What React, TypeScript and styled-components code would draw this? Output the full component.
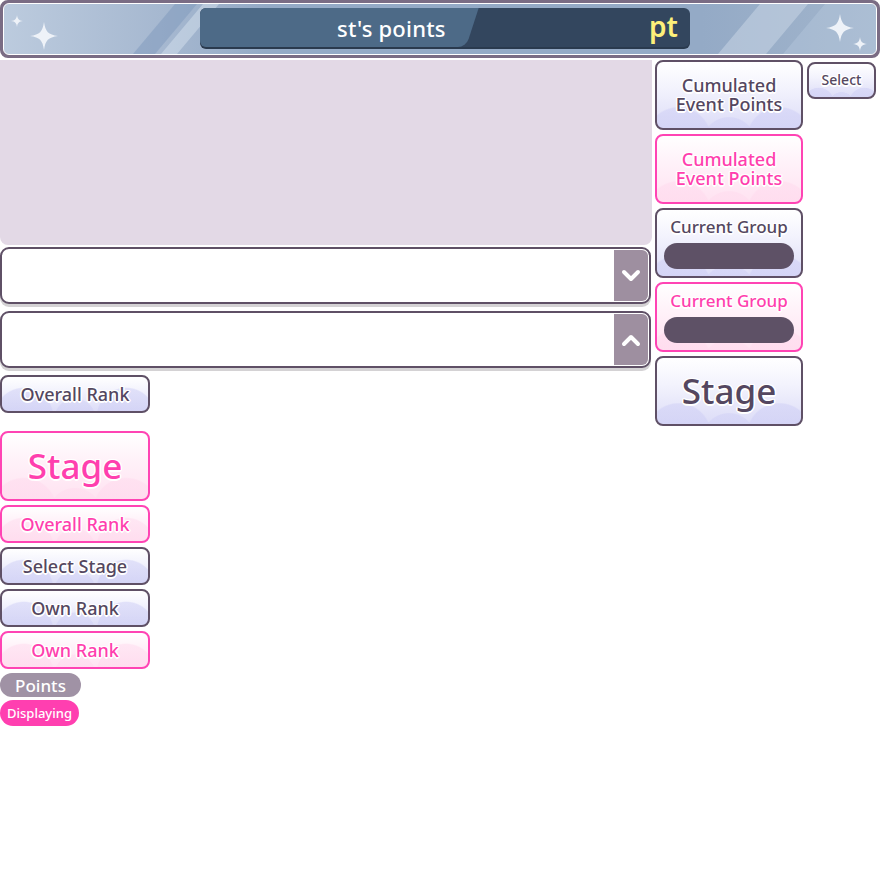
import React from "react";
import styled, { createGlobalStyle, css } from "styled-components";

const Global = createGlobalStyle`
  html, body { margin: 0; padding: 0; background: #ffffff; }
  body { font-family: "Noto Sans", "Open Sans", sans-serif; }
  * { box-sizing: border-box; }
`;

const Page = styled.div`
  width: 880px;
  height: 880px;
  display: flex;
  flex-direction: column;
  gap: 2px;
`;

const Header = styled.div`
  position: relative;
  height: 58px;
  border: 2px solid #7a6c84;
  border-radius: 8px;
  padding: 1px;
  background: #7a6c84;
`;

const HeaderInner = styled.div`
  position: relative;
  height: 100%;
  border: 1px solid #ffffff;
  border-radius: 6px;
  overflow: hidden;
  display: flex;
  align-items: center;
  justify-content: center;
  background: linear-gradient(90deg, #bccbde 0%, #a6b8d0 18%, #94aac6 30%, #94aac6 80%, #a2b5cc 100%);
`;

const Stripe = styled.div<{ $left: number; $w: number; $c: string }>`
  position: absolute;
  top: -4px;
  bottom: -4px;
  left: ${(p) => p.$left}px;
  width: ${(p) => p.$w}px;
  background: ${(p) => p.$c};
  transform: skewX(-40deg);
`;

const Sparkle = styled.svg<{ $x: number; $y: number }>`
  position: absolute;
  left: ${(p) => p.$x}px;
  top: ${(p) => p.$y}px;
`;

const Pill = styled.div`
  position: relative;
  width: 490px;
  height: 39px;
  margin-top: -3px;
  margin-left: 10px;
  border-radius: 6px;
  background: #33465e;
  box-shadow: 0 2px 0 #2a3a4e;
  display: flex;
  align-items: center;
  overflow: hidden;
`;

const PillLight = styled.div`
  position: absolute;
  left: -20px;
  top: 0;
  bottom: 0;
  width: 286px;
  background: #4d6a87;
  border-radius: 0 0 8px 0;
  transform: skewX(-18deg);
  transform-origin: bottom left;
`;

const PillTitle = styled.span`
  position: relative;
  margin-left: 137px;
  color: #ffffff;
  font-size: 22px;
  font-weight: 500;
  letter-spacing: 0.2px;
`;

const PillUnit = styled.span`
  position: absolute;
  right: 12px;
  top: 0;
  bottom: 0;
  display: flex;
  align-items: center;
  color: #fdf07a;
  font-size: 28px;
  font-weight: 600;
  line-height: 1;
  padding-bottom: 3px;
`;

const Body = styled.div`
  display: flex;
  gap: 3px;
`;

const LeftCol = styled.div`
  width: 652px;
  display: flex;
  flex-direction: column;
`;

const Banner = styled.div`
  height: 185px;
  background: #e3d9e6;
  border-radius: 0 0 8px 8px;
`;

const Dropdown = styled.div<{ $top: number }>`
  margin-top: ${(p) => p.$top}px;
  width: 651px;
  height: 57px;
  border: 2px solid #5f5066;
  border-radius: 9px;
  background: #ffffff;
  box-shadow: 0 3px 0 #d4d2d4;
  display: flex;
  justify-content: flex-end;
  padding: 1px 1px 1px 0;
`;

const Arrow = styled.div`
  width: 34px;
  height: 100%;
  background: #9e8fa0;
  border-radius: 0 6px 6px 0;
  display: flex;
  align-items: center;
  justify-content: center;
`;

const halo = css`
  text-shadow:
    0 0 2px #fff, 1px 1px 0 #fff, -1px -1px 0 #fff, 1px -1px 0 #fff, -1px 1px 0 #fff,
    0 1.5px 0 #fff, 0 -1.5px 0 #fff, 1.5px 0 0 #fff, -1.5px 0 0 #fff;
`;

const Btn = styled.div<{ $pink?: boolean; $w?: number; $h?: number; $size?: number; $top?: number }>`
  width: ${(p) => p.$w ?? 150}px;
  height: ${(p) => p.$h ?? 38}px;
  margin-top: ${(p) => p.$top ?? 0}px;
  flex: none;
  border: 2px solid ${(p) => (p.$pink ? "#ff44b4" : "#5f5066")};
  border-radius: 8px;
  display: flex;
  flex-direction: column;
  align-items: center;
  justify-content: center;
  text-align: center;
  color: ${(p) => (p.$pink ? "#ff3fae" : "#544760")};
  font-size: ${(p) => p.$size ?? 18}px;
  font-weight: 500;
  line-height: 1.05;
  ${halo};
  background:
    radial-gradient(circle at 15% 118%, ${(p) => (p.$pink ? "rgba(255,215,236,0.45)" : "rgba(205,205,245,0.5)")} 0 22%, transparent 23%),
    radial-gradient(circle at 50% 124%, ${(p) => (p.$pink ? "rgba(255,215,236,0.4)" : "rgba(205,205,245,0.45)")} 0 24%, transparent 25%),
    radial-gradient(circle at 85% 118%, ${(p) => (p.$pink ? "rgba(255,215,236,0.45)" : "rgba(205,205,245,0.5)")} 0 22%, transparent 23%),
    linear-gradient(180deg, #ffffff 0%, ${(p) => (p.$pink ? "#fff2f9" : "#f3f3fd")} 40%, ${(p) => (p.$pink ? "#ffe2f1" : "#dcdcf7")} 100%);
`;

const Line = styled.span`
  display: block;
  height: 19px;
  line-height: 19px;
`;

const GroupBar = styled.div`
  margin-top: 7px;
  width: 130px;
  height: 26px;
  border-radius: 13px;
  background: #5e5166;
  text-shadow: none;
`;

const LeftButtons = styled.div`
  margin-top: 7px;
  display: flex;
  flex-direction: column;
  gap: 4px;
`;

const Tag = styled.div<{ $pink?: boolean; $w: number; $h: number; $size: number }>`
  width: ${(p) => p.$w}px;
  height: ${(p) => p.$h}px;
  border-radius: ${(p) => p.$h / 2}px;
  background: ${(p) => (p.$pink ? "#ff3fb0" : "#a092a5")};
  color: #ffffff;
  font-size: ${(p) => p.$size}px;
  font-weight: 500;
  display: flex;
  align-items: center;
  justify-content: center;
`;

const TagGroup = styled.div`
  display: flex;
  flex-direction: column;
  gap: 3px;
`;

const RightCol = styled.div`
  width: 148px;
  display: flex;
  flex-direction: column;
  gap: 4px;
`;

const SideCol = styled.div`
  padding-top: 2px;
  padding-left: 1px;
`;

const Star = ({ x, y, s }: { x: number; y: number; s: number }) => (
  <Sparkle $x={x} $y={y} width={s} height={s} viewBox="0 0 20 20">
    <path
      d="M10 0 C11 7 13 9 20 10 C13 11 11 13 10 20 C9 13 7 11 0 10 C7 9 9 7 10 0 Z"
      fill="#eef2f8"
    />
  </Sparkle>
);

const Chevron = ({ up }: { up?: boolean }) => (
  <svg width="20" height="14" viewBox="0 0 20 14">
    <path
      d={up ? "M3 11 L10 4 L17 11" : "M3 3 L10 10 L17 3"}
      fill="none"
      stroke="#ffffff"
      strokeWidth="4"
      strokeLinecap="round"
      strokeLinejoin="round"
    />
  </svg>
);

export default function App() {
  return (
    <Page>
      <Global />
      <Header>
        <HeaderInner>
          <Stripe $left={150} $w={22} $c="rgba(130,155,190,0.55)" />
          <Stripe $left={178} $w={16} $c="rgba(220,230,242,0.45)" />
          <Stripe $left={735} $w={48} $c="rgba(210,222,236,0.45)" />
          <Stripe $left={800} $w={90} $c="rgba(190,205,225,0.35)" />
          <Star x={7} y={11} s={12} />
          <Star x={26} y={18} s={28} />
          <Star x={822} y={10} s={28} />
          <Star x={849} y={33} s={14} />
          <Pill>
            <PillLight />
            <PillTitle>st's points</PillTitle>
            <PillUnit>pt</PillUnit>
          </Pill>
        </HeaderInner>
      </Header>
      <Body>
        <LeftCol>
          <Banner />
          <Dropdown $top={2}>
            <Arrow>
              <Chevron />
            </Arrow>
          </Dropdown>
          <Dropdown $top={7}>
            <Arrow>
              <Chevron up />
            </Arrow>
          </Dropdown>
          <LeftButtons>
            <Btn>Overall Rank</Btn>
            <Btn $pink $h={70} $size={35} $top={14}>Stage</Btn>
            <Btn $pink>Overall Rank</Btn>
            <Btn>Select Stage</Btn>
            <Btn>Own Rank</Btn>
            <Btn $pink>Own Rank</Btn>
            <TagGroup>
              <Tag $w={81} $h={24} $size={17}>Points</Tag>
              <Tag $pink $w={79} $h={26} $size={13}>Displaying</Tag>
            </TagGroup>
          </LeftButtons>
        </LeftCol>
        <RightCol>
          <Btn $w={148} $h={70} $size={18}>
            <Line>Cumulated</Line>
            <Line>Event Points</Line>
          </Btn>
          <Btn $pink $w={148} $h={70} $size={18}>
            <Line>Cumulated</Line>
            <Line>Event Points</Line>
          </Btn>
          <Btn $w={148} $h={70} $size={17}>
            <Line>Current Group</Line>
            <GroupBar />
          </Btn>
          <Btn $pink $w={148} $h={70} $size={17}>
            <Line>Current Group</Line>
            <GroupBar />
          </Btn>
          <Btn $w={148} $h={70} $size={35}>Stage</Btn>
        </RightCol>
        <SideCol>
          <Btn $w={69} $h={37} $size={14}>Select</Btn>
        </SideCol>
      </Body>
    </Page>
  );
}
